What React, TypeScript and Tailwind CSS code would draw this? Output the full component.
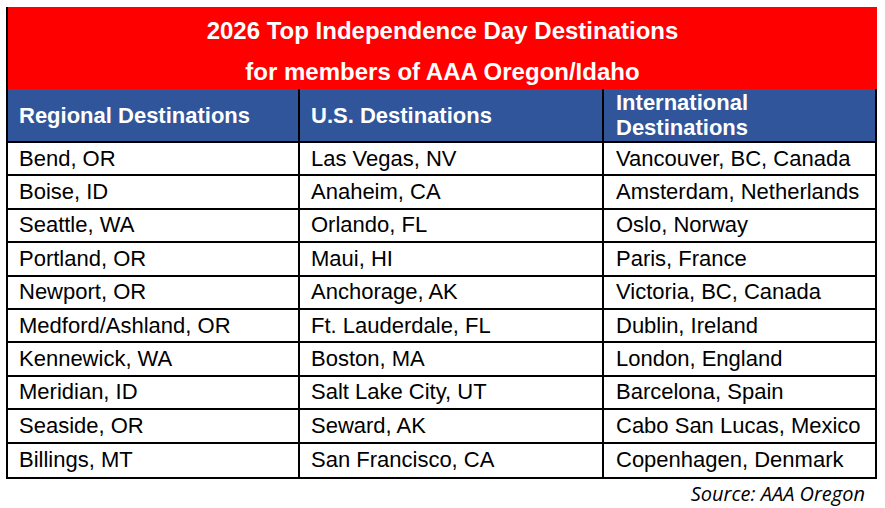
import React from 'react'

const rows: Array<[string, string, string]> = [
  ['Bend, OR', 'Las Vegas, NV', 'Vancouver, BC, Canada'],
  ['Boise, ID', 'Anaheim, CA', 'Amsterdam, Netherlands'],
  ['Seattle, WA', 'Orlando, FL', 'Oslo, Norway'],
  ['Portland, OR', 'Maui, HI', 'Paris, France'],
  ['Newport, OR', 'Anchorage, AK', 'Victoria, BC, Canada'],
  ['Medford/Ashland, OR', 'Ft. Lauderdale, FL', 'Dublin, Ireland'],
  ['Kennewick, WA', 'Boston, MA', 'London, England'],
  ['Meridian, ID', 'Salt Lake City, UT', 'Barcelona, Spain'],
  ['Seaside, OR', 'Seward, AK', 'Cabo San Lucas, Mexico'],
  ['Billings, MT', 'San Francisco, CA', 'Copenhagen, Denmark'],
]

const cols = 'grid grid-cols-[292px_304px_271px]'

export default function App() {
  return (
    <div
      className="h-[508px] w-[885px] bg-white pl-[6px] pt-[7px]"
      style={{ fontFamily: '"Liberation Sans", Arial, sans-serif' }}
    >
      <div className="w-[871px]">
        {/* title banner */}
        <div className="h-[82px] overflow-hidden border-l-2 border-black bg-[#ff0000] pt-[3px] text-center text-[24px] font-bold leading-[41px] text-white">
          <div>2026 Top Independence Day Destinations</div>
          <div>for members of AAA Oregon/Idaho</div>
        </div>

        <div className="border-x-2 border-b-2 border-black">
          {/* column headers */}
          <div className={`${cols} h-[54px] border-b-2 border-black bg-[#30559a] text-[22px] font-bold leading-[25px] text-white`}>
            <div className="flex items-center border-r-2 border-black pl-[11px]">Regional Destinations</div>
            <div className="flex items-center border-r-2 border-black pl-[11px]">U.S. Destinations</div>
            <div className="flex items-center pl-[12px]">
              International
              <br />
              Destinations
            </div>
          </div>

          {rows.map((r, i) => (
            <div
              key={i}
              className={`${cols} h-[33.4px] text-[22px] leading-none text-black ${i < rows.length - 1 ? 'border-b-2 border-black' : ''}`}
            >
              <div className="flex items-center border-r-2 border-black pl-[11px]">{r[0]}</div>
              <div className="flex items-center border-r-2 border-black pl-[11px]">{r[1]}</div>
              <div className="flex items-center pl-[12px]">{r[2]}</div>
            </div>
          ))}
        </div>
      </div>

      <div
        className="flex justify-end pr-[20px] pt-[2px] text-[20px] italic leading-[26px] text-black"
        style={{ fontFamily: '"Open Sans", sans-serif' }}
      >
        Source: AAA Oregon
      </div>
    </div>
  )
}
